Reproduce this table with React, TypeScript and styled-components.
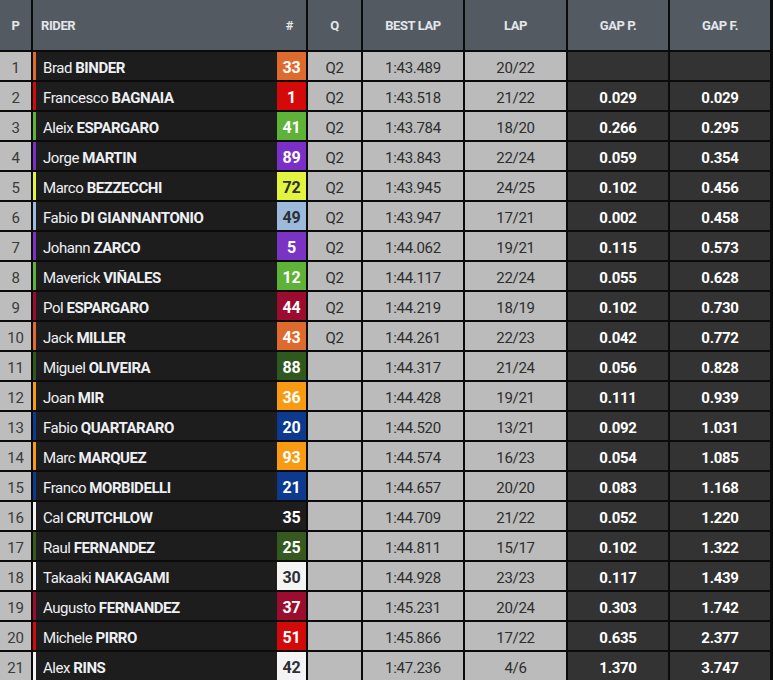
import React from "react";
import styled, { createGlobalStyle } from "styled-components";

const Global = createGlobalStyle`
  html, body { margin: 0; padding: 0; background: #0b0b0b; }
  body { font-family: Roboto, "Liberation Sans", sans-serif; }
`;

type Rider = {
  first: string;
  last: string;
  num: string;
  color: string;
  dark?: boolean;
  stripe?: string;
  q: string;
  best: string;
  lap: string;
  gapP: string;
  gapF: string;
};

const riders: Rider[] = [
  { first: "Brad", last: "BINDER", num: "33", color: "#df6a2d", q: "Q2", best: "1:43.489", lap: "20/22", gapP: "", gapF: "" },
  { first: "Francesco", last: "BAGNAIA", num: "1", color: "#d40a0a", q: "Q2", best: "1:43.518", lap: "21/22", gapP: "0.029", gapF: "0.029" },
  { first: "Aleix", last: "ESPARGARO", num: "41", color: "#5eb237", q: "Q2", best: "1:43.784", lap: "18/20", gapP: "0.266", gapF: "0.295" },
  { first: "Jorge", last: "MARTIN", num: "89", color: "#7a30c6", q: "Q2", best: "1:43.843", lap: "22/24", gapP: "0.059", gapF: "0.354" },
  { first: "Marco", last: "BEZZECCHI", num: "72", color: "#e3f43f", dark: true, q: "Q2", best: "1:43.945", lap: "24/25", gapP: "0.102", gapF: "0.456" },
  { first: "Fabio", last: "DI GIANNANTONIO", num: "49", color: "#9dbadd", dark: true, q: "Q2", best: "1:43.947", lap: "17/21", gapP: "0.002", gapF: "0.458" },
  { first: "Johann", last: "ZARCO", num: "5", color: "#7b33c4", q: "Q2", best: "1:44.062", lap: "19/21", gapP: "0.115", gapF: "0.573" },
  { first: "Maverick", last: "VIÑALES", num: "12", color: "#5eb237", q: "Q2", best: "1:44.117", lap: "22/24", gapP: "0.055", gapF: "0.628" },
  { first: "Pol", last: "ESPARGARO", num: "44", color: "#9b0c2e", q: "Q2", best: "1:44.219", lap: "18/19", gapP: "0.102", gapF: "0.730" },
  { first: "Jack", last: "MILLER", num: "43", color: "#df6a2d", q: "Q2", best: "1:44.261", lap: "22/23", gapP: "0.042", gapF: "0.772" },
  { first: "Miguel", last: "OLIVEIRA", num: "88", color: "#2f581f", q: "", best: "1:44.317", lap: "21/24", gapP: "0.056", gapF: "0.828" },
  { first: "Joan", last: "MIR", num: "36", color: "#f89b12", q: "", best: "1:44.428", lap: "19/21", gapP: "0.111", gapF: "0.939" },
  { first: "Fabio", last: "QUARTARARO", num: "20", color: "#0d3a8e", q: "", best: "1:44.520", lap: "13/21", gapP: "0.092", gapF: "1.031" },
  { first: "Marc", last: "MARQUEZ", num: "93", color: "#f89b12", q: "", best: "1:44.574", lap: "16/23", gapP: "0.054", gapF: "1.085" },
  { first: "Franco", last: "MORBIDELLI", num: "21", color: "#0d3a8e", q: "", best: "1:44.657", lap: "20/20", gapP: "0.083", gapF: "1.168" },
  { first: "Cal", last: "CRUTCHLOW", num: "35", color: "#1d1d1d", stripe: "#f2f2f2", q: "", best: "1:44.709", lap: "21/22", gapP: "0.052", gapF: "1.220" },
  { first: "Raul", last: "FERNANDEZ", num: "25", color: "#35591f", q: "", best: "1:44.811", lap: "15/17", gapP: "0.102", gapF: "1.322" },
  { first: "Takaaki", last: "NAKAGAMI", num: "30", color: "#f4f4f4", dark: true, q: "", best: "1:44.928", lap: "23/23", gapP: "0.117", gapF: "1.439" },
  { first: "Augusto", last: "FERNANDEZ", num: "37", color: "#9b0c2e", q: "", best: "1:45.231", lap: "20/24", gapP: "0.303", gapF: "1.742" },
  { first: "Michele", last: "PIRRO", num: "51", color: "#d40a0a", q: "", best: "1:45.866", lap: "17/22", gapP: "0.635", gapF: "2.377" },
  { first: "Alex", last: "RINS", num: "42", color: "#f4f4f4", dark: true, q: "", best: "1:47.236", lap: "4/6", gapP: "1.370", gapF: "3.747" },
];

const Frame = styled.div`
  width: 773px;
  height: 680px;
  overflow: hidden;
  background: #0b0b0b;
`;

const Grid = styled.div`
  display: grid;
  grid-template-columns: 31px 273px 53px 100px 101px 100px 100px;
  grid-auto-rows: 28px;
  grid-template-rows: 50px;
  gap: 2px;
`;

const HeadCell = styled.div<{ $left?: boolean }>`
  background: #545a62;
  color: #e3e6ea;
  font-weight: 700;
  font-size: 13px;
  letter-spacing: -0.4px;
  display: flex;
  align-items: center;
  justify-content: ${(p) => (p.$left ? "space-between" : "center")};
  padding: ${(p) => (p.$left ? "1px 13px 0 8px" : "1px 0 0")};
`;

const BodyCell = styled.div`
  display: flex;
  align-items: center;
  justify-content: center;
  padding-top: 3px;
  font-size: 15px;
  letter-spacing: -0.3px;
  box-sizing: border-box;
`;

const PosCell = styled(BodyCell)`
  background: #bdbdbd;
  color: #3a3a3a;
`;

const RiderCell = styled(BodyCell)<{ $stripe: string }>`
  background: #1d1d1d;
  border-left: 3px solid ${(p) => p.$stripe};
  justify-content: flex-start;
  padding-top: 0;
  color: #eef0f4;
`;

const Name = styled.span`
  flex: 1;
  padding: 3px 0 0 7px;
  white-space: nowrap;
  letter-spacing: -0.45px;
  b {
    font-weight: 700;
  }
`;

const Badge = styled.div<{ $bg: string; $dark?: boolean }>`
  width: 29px;
  align-self: stretch;
  box-sizing: border-box;
  padding-top: 3px;
  background: ${(p) => p.$bg};
  color: ${(p) => (p.$dark ? "#2b2f36" : "#ffffff")};
  font-weight: 700;
  font-size: 16px;
  letter-spacing: -0.3px;
  display: flex;
  align-items: center;
  justify-content: center;
`;

const LightCell = styled(BodyCell)`
  background: #bbbbbb;
  color: #2e2e2e;
`;

const GapCell = styled(BodyCell)`
  background: #333333;
  color: #ffffff;
  font-weight: 700;
`;

export default function App() {
  return (
    <Frame>
      <Global />
      <Grid>
        <HeadCell>P</HeadCell>
        <HeadCell $left>
          <span>RIDER</span>
          <span>#</span>
        </HeadCell>
        <HeadCell>Q</HeadCell>
        <HeadCell>BEST LAP</HeadCell>
        <HeadCell>LAP</HeadCell>
        <HeadCell>GAP P.</HeadCell>
        <HeadCell>GAP F.</HeadCell>
        {riders.map((r, i) => (
          <React.Fragment key={i}>
            <PosCell>{i + 1}</PosCell>
            <RiderCell $stripe={r.stripe ?? r.color}>
              <Name>
                {r.first} <b>{r.last}</b>
              </Name>
              <Badge $bg={r.color} $dark={r.dark}>
                {r.num}
              </Badge>
            </RiderCell>
            <LightCell>{r.q}</LightCell>
            <LightCell>{r.best}</LightCell>
            <LightCell>{r.lap}</LightCell>
            <GapCell>{r.gapP}</GapCell>
            <GapCell>{r.gapF}</GapCell>
          </React.Fragment>
        ))}
      </Grid>
    </Frame>
  );
}
